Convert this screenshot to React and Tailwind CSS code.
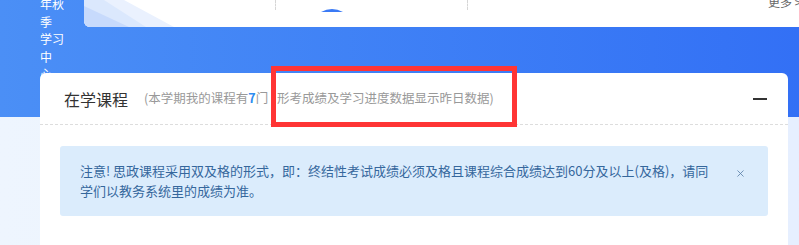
import { X } from 'lucide-react'

function TopCard() {
  return (
    <div className="relative h-[27px] flex-1 overflow-hidden rounded-bl-[6px] bg-white">
      <svg className="absolute left-0 top-0" width="90" height="27" viewBox="0 0 90 27">
        <polygon points="0,0 30,0 75,27 0,27" fill="#dbe8fd" />
        <polygon points="0,6 45,27 0,27" fill="#c7dafc" />
        <polygon points="20,0 40,0 90,27 62,27" fill="#eaf1fe" />
      </svg>
      <div className="absolute left-[191px] top-0 h-[10px] border-l border-dashed border-[#d6d6d6]" />
      <div className="absolute left-[383px] top-0 h-[10px] border-l border-dashed border-[#d6d6d6]" />
      <svg className="absolute left-[237px] top-[8px]" width="22" height="4" viewBox="0 0 22 4">
        <path d="M0 4 Q11 -2 22 4 Z" fill="#3a7af5" />
      </svg>
      <span className="absolute left-[684px] top-[-7px] whitespace-nowrap text-[12px] text-[#666]">更多 &gt;</span>
    </div>
  )
}

function Header() {
  return (
    <div className="flex h-[117px] bg-gradient-to-r from-[#4b8ff6] to-[#3370f5]">
      <div className="ml-[40px] mt-[-5px] w-[44px] text-[12px] leading-[17.5px] text-white">
        年秋<br />季<br />学习<br />中<br />心
      </div>
      <TopCard />
    </div>
  )
}

function CourseCard() {
  return (
    <div className="relative z-10 ml-[40px] mr-[11px] mt-[-44px] h-[172px] rounded-t-[6px] bg-white">
      <div className="flex h-[52px] items-center border-b border-dashed border-[#dddddd] pl-[24px] pr-[21px]">
        <span className="text-[16px] text-[#333]">在学课程</span>
        <span className="ml-[16px] whitespace-nowrap text-[12.5px] text-[#999]">
          (本学期我的课程有<b className="font-bold text-[#2d8cf0]">7</b>门 | 形考成绩及学习进度数据显示昨日数据)
        </span>
        <span className="ml-auto h-[2px] w-[14px] bg-[#333]" />
      </div>
      <div className="mx-[20px] mt-[21px] flex h-[70px] rounded-[3px] bg-[#dbecfc] pl-[20px] pr-[22px] pt-[15px]">
        <p className="whitespace-nowrap text-[13px] leading-[20px] text-[#35679c]">
          注意! 思政课程采用双及格的形式，即：终结性考试成绩必须及格且课程综合成绩达到60分及以上(及格)，请同
          <br />
          学们以教务系统里的成绩为准。
        </p>
        <X className="ml-auto mt-[7px] text-[#5a80a8]" size={11} strokeWidth={1.8} />
      </div>
    </div>
  )
}

export default function App() {
  return (
    <div
      className="relative h-[245px] w-[799px] overflow-hidden bg-gradient-to-r from-[#eef5fe] to-[#e6efff]"
      style={{ fontFamily: '"Noto Sans CJK SC", "Noto Sans", sans-serif' }}
    >
      <Header />
      <CourseCard />
      <div className="pointer-events-none absolute left-[271px] top-[66px] z-20 h-[61px] w-[246px] border-[5px] border-[#ff3535]" />
    </div>
  )
}
